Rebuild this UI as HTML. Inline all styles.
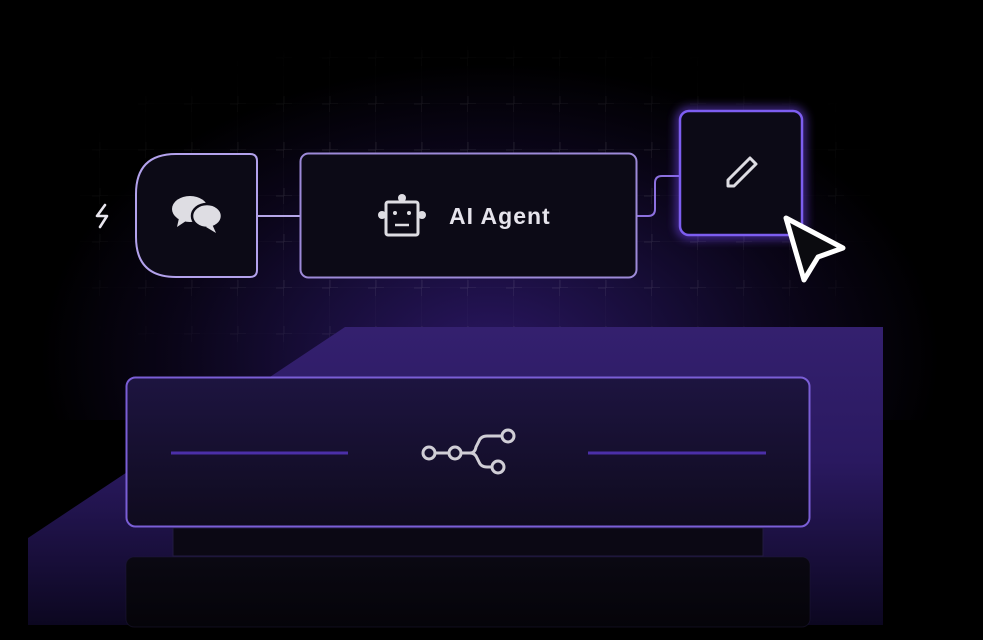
<!DOCTYPE html>
<html><head><style>
html,body{margin:0;padding:0;background:#000;}
body{width:983px;height:640px;position:relative;overflow:hidden;font-family:"Liberation Sans",sans-serif;}
.abs{position:absolute;}
.bg{left:40px;top:0;width:900px;height:420px;background:radial-gradient(ellipse 50% 70% at 50% 85%, #291660 0%, #170d38 40%, #0a0518 70%, rgba(0,0,0,0) 100%);}
</style></head><body>
<div class="abs bg"></div>
<svg class="abs" style="left:0;top:0" width="983" height="640" viewBox="0 0 983 640">
<defs>
<pattern id="grid" width="46" height="46" patternUnits="userSpaceOnUse" x="8" y="12">
<path d="M46 0V46M0 46H46" stroke="#ffffff" stroke-opacity="0.035" stroke-width="1"/>
<path d="M46 38V54M38 46H54M0 38V54M-8 46H8M46 -8V8M38 0H54" stroke="#ffffff" stroke-opacity="0.09" stroke-width="1"/>
</pattern>
<radialGradient id="gm" cx="0.5" cy="0.6" r="0.6">
<stop offset="0.5" stop-color="#fff"/>
<stop offset="1" stop-color="#000"/>
</radialGradient>
<mask id="gmask"><rect x="80" y="30" width="790" height="320" fill="url(#gm)"/></mask>
<linearGradient id="slab" x1="0" y1="0" x2="0" y2="1">
<stop offset="0" stop-color="#34206f"/>
<stop offset="0.45" stop-color="#2a1960"/>
<stop offset="1" stop-color="#0c0720"/>
</linearGradient>
<linearGradient id="box" x1="0" y1="0" x2="0" y2="1">
<stop offset="0" stop-color="#1d1440"/>
<stop offset="1" stop-color="#0f0b1e"/>
</linearGradient>
<linearGradient id="refl" x1="0" y1="0" x2="0" y2="1">
<stop offset="0" stop-color="#0a0812"/>
<stop offset="1" stop-color="#050409"/>
</linearGradient>
<filter id="glow" x="-30%" y="-30%" width="160%" height="160%"><feGaussianBlur stdDeviation="5"/></filter>
</defs>
<rect x="80" y="30" width="790" height="320" fill="url(#grid)" mask="url(#gmask)"/>
<polygon points="345,327 883,327 883,625 28,625 28,538" fill="url(#slab)"/>
<rect x="126.5" y="377.5" width="683" height="149" rx="9" fill="url(#box)" stroke="#7a5ed6" stroke-width="2"/>
<rect x="173" y="528" width="590" height="28" fill="#0b0814" stroke="#221a40"/>
<rect x="126" y="557" width="684" height="70" rx="8" fill="url(#refl)" stroke="#1e1838" stroke-opacity="0.5"/>
<line x1="171" y1="453" x2="348" y2="453" stroke="#4b2fa8" stroke-width="3"/>
<line x1="588" y1="453" x2="766" y2="453" stroke="#4b2fa8" stroke-width="3"/>
<g fill="none" stroke="#d0ced6" stroke-width="3">
<circle cx="429" cy="453" r="6"/><circle cx="455" cy="453" r="6"/>
<circle cx="508" cy="436" r="6"/><circle cx="498" cy="467" r="6"/>
<path d="M435 453H449M461 453H470q5 0 6-6l3-6q2-5 8-5H502M470 453q5 0 7 5l2 4q2 5 8 5H492"/>
</g>
<path d="M258 216H300" stroke="#b5a6e8" stroke-width="2" fill="none"/>
<path d="M637 216H648q7 0 7-7V183q0-7 7-7H679" stroke="#8c70e0" stroke-width="2" fill="none"/>
<path d="M176 154H250q7 0 7 7V270q0 7-7 7H176q-40 0-40-40V194q0-40 40-40Z" fill="#0c0a16" stroke="#b3a2ec" stroke-width="2"/>
<path d="M105 205l-8 11h10l-7 11" fill="none" stroke="#e8e6ee" stroke-width="2.6" stroke-linejoin="round" stroke-linecap="round"/>
<ellipse cx="190" cy="209" rx="18" ry="13" fill="#dedde3"/>
<path d="M179 218l-2 9 9-6z" fill="#dedde3"/>
<ellipse cx="207" cy="216" rx="15" ry="12" fill="#dedde3" stroke="#0c0a16" stroke-width="2.5"/>
<path d="M212 224l4 9-10-6z" fill="#dedde3"/>
<rect x="300.5" y="153.5" width="336" height="124" rx="8" fill="#0c0a16" stroke="#9d8ad8" stroke-width="2"/>
<g fill="#dedde3">
<circle cx="402" cy="198" r="4"/>
<circle cx="382" cy="215" r="4"/><circle cx="422" cy="215" r="4"/>
</g>
<rect x="386" y="202" width="32" height="33" rx="2" fill="#0c0a16" stroke="#dedde3" stroke-width="3"/>
<circle cx="395" cy="213" r="2" fill="#dedde3"/><circle cx="409" cy="213" r="2" fill="#dedde3"/>
<line x1="395" y1="225" x2="409" y2="225" stroke="#dedde3" stroke-width="2.5"/>
<text x="449" y="224" font-family="Liberation Sans, sans-serif" font-weight="bold" font-size="23" fill="#e6e4ec" letter-spacing="1">AI Agent</text>
<rect x="680" y="111" width="122" height="124" rx="9" fill="none" stroke="#7a4cff" stroke-width="6" filter="url(#glow)" opacity="0.8"/>
<rect x="680" y="111" width="122" height="124" rx="9" fill="#0c0a16" stroke="#7d5ef0" stroke-width="2.5"/>
<path d="M728 180l22-22l6 6l-22 22h-6z" fill="none" stroke="#dedde3" stroke-width="3" stroke-linejoin="round"/>
<path d="M786 218L843 248L818 257L804 280Z" fill="#0b0b0f" stroke="#fff" stroke-width="5" stroke-linejoin="round"/>
</svg>
</body></html>
